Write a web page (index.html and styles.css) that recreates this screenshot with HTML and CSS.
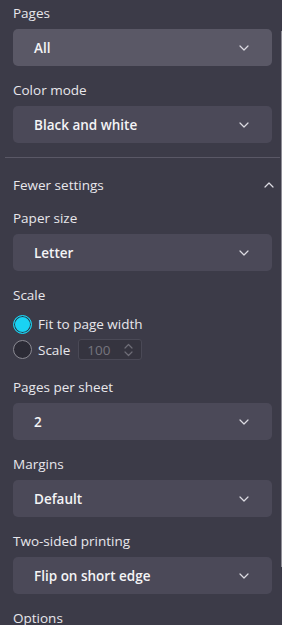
FILE: index.html
```html
<!DOCTYPE html>
<html>
  <head>
    <link rel="stylesheet" href="styles.css">
  </head>
  <body>
    <div class="panel">
      <div class="group first">
        <div class="label">Pages</div>
        <div class="select hover"><span>All</span><svg class="chev" width="10" height="6" viewBox="0 0 10 6"><path d="M1 1l4 4 4-4"/></svg></div>
      </div>
      <div class="group">
        <div class="label">Color mode</div>
        <div class="select"><span>Black and white</span><svg class="chev" width="10" height="6" viewBox="0 0 10 6"><path d="M1 1l4 4 4-4"/></svg></div>
      </div>

      <div class="divider"></div>

      <div class="toggle">
        <span>Fewer settings</span>
        <svg class="chev up" width="10" height="6" viewBox="0 0 10 6"><path d="M1 5l4-4 4 4"/></svg>
      </div>

      <div class="group tight">
        <div class="label">Paper size</div>
        <div class="select"><span>Letter</span><svg class="chev" width="10" height="6" viewBox="0 0 10 6"><path d="M1 1l4 4 4-4"/></svg></div>
      </div>

      <div class="group">
        <div class="label">Scale</div>
        <div class="radios">
          <div class="radio-row">
            <span class="radio on"></span>
            <span>Fit to page width</span>
          </div>
          <div class="radio-row">
            <span class="radio"></span>
            <span>Scale</span>
            <div class="num">
              <span>100</span>
              <svg class="spin" width="9" height="14" viewBox="0 0 9 14"><path d="M1 5l3.5-3.5L8 5M1 9l3.5 3.5L8 9"/></svg>
            </div>
          </div>
        </div>
      </div>

      <div class="group wide">
        <div class="label">Pages per sheet</div>
        <div class="select"><span>2</span><svg class="chev" width="10" height="6" viewBox="0 0 10 6"><path d="M1 1l4 4 4-4"/></svg></div>
      </div>
      <div class="group">
        <div class="label">Margins</div>
        <div class="select"><span>Default</span><svg class="chev" width="10" height="6" viewBox="0 0 10 6"><path d="M1 1l4 4 4-4"/></svg></div>
      </div>
      <div class="group">
        <div class="label">Two-sided printing</div>
        <div class="select"><span>Flip on short edge</span><svg class="chev" width="10" height="6" viewBox="0 0 10 6"><path d="M1 1l4 4 4-4"/></svg></div>
      </div>
      <div class="group">
        <div class="label">Options</div>
      </div>
    </div>
    <div class="scrollthumb"></div>
  </body>
</html>
```

FILE: styles.css
```css
html, body {
  margin: 0;
  height: 100%;
  background: #3c3b48;
  overflow: hidden;
}

body {
  font-family: "Open Sans", "Noto Sans", sans-serif;
  font-size: 13.5px;
  color: #e8e7ec;
}

.panel {
  padding: 3px 10px 0 13px;
}

.group {
  margin-top: 14px;
}
.group.first {
  margin-top: 0;
}
.group.tight {
  margin-top: 13px;
}
.group.wide {
  margin-top: 17px;
}

.label {
  height: 20px;
  line-height: 20px;
  margin-bottom: 6px;
}

.select {
  height: 37px;
  box-sizing: border-box;
  background: #4b4958;
  border-radius: 5px;
  display: flex;
  align-items: center;
  justify-content: space-between;
  padding: 0 23px 0 21px;
  font-weight: 600;
  color: #f4f4f6;
}
.select.hover {
  background: #5a5866;
}

.chev path,
.spin path {
  fill: none;
  stroke: #dcdbe2;
  stroke-width: 1.2;
  stroke-linecap: round;
  stroke-linejoin: round;
}

.divider {
  height: 1px;
  background: #5a5866;
  margin: 14px -8px 0 -8px;
}

.toggle {
  margin-top: 17px;
  height: 20px;
  line-height: 20px;
  display: flex;
  align-items: center;
  justify-content: space-between;
}
.toggle .chev {
  margin-right: -2px;
}

.radios {
  margin-top: 9px;
  display: flex;
  flex-direction: column;
  gap: 5px;
}

.radio-row {
  display: flex;
  align-items: center;
  gap: 6px;
  min-height: 20px;
}

.radio {
  width: 19px;
  height: 19px;
  box-sizing: border-box;
  border-radius: 50%;
  border: 1px solid #8b8a93;
  background: #2c2b36;
  flex: none;
}
.radio.on {
  border: 1px solid #19d3f3;
  background: #19d3f3;
  box-shadow: inset 0 0 0 1px #2a3a48;
}

.num {
  margin-left: 2px;
  width: 64px;
  height: 21px;
  box-sizing: border-box;
  border: 1px solid #4a4956;
  background: #35343f;
  border-radius: 3px;
  display: flex;
  align-items: center;
  justify-content: space-between;
  padding: 0 8px;
  color: #75747e;
}
.num .spin path {
  stroke: #6e6d77;
}

.scrollthumb {
  position: fixed;
  right: 0;
  top: 31px;
  width: 1px;
  height: 536px;
  background: #8e8d96;
}
```
